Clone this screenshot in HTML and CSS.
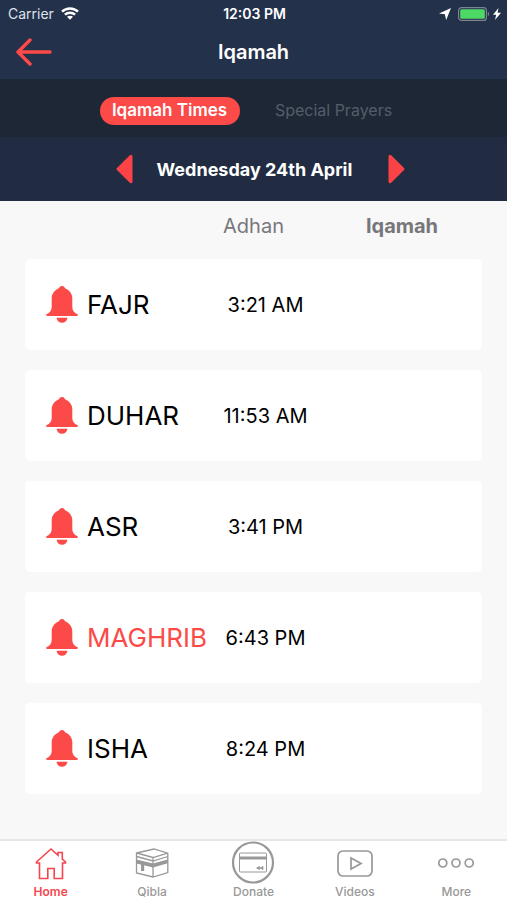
FILE: index.html
```
<!DOCTYPE html>
<html lang="en">
<head>
    <meta charset="UTF-8">
    <meta name="viewport" content="width=device-width, initial-scale=1.0">
    <title>Iqamah</title>
    <link rel="stylesheet" href="styles.css">
</head>
<body>
    <!-- shared icons -->
    <svg class="sprite" width="0" height="0" aria-hidden="true">
        <symbol id="bell" viewBox="0 0 32 38">
            <path d="M16 0c1.500 0 2.400.8 3 2.200C23.500 4.200 26.300 7.800 26.300 12v9c0 3.500 1.700 5.500 5.200 7.300.7.500.5 1.700-.5 1.700H1c-1 0-1.200-1.200-.5-1.700C4 26.500 5.700 24.500 5.700 21v-9c0-4.200 2.800-7.800 7.300-9.800C13.600.8 14.500 0 16 0z"/>
            <path d="M10.500 31.800h11c-.5 3-2.600 5-5.500 5s-5-2-5.500-5z"/>
        </symbol>
    </svg>

    <header class="header">
        <div class="status-bar">
            <div class="status-left">
                <span>Carrier</span>
                <svg width="18" height="13" viewBox="0 0 18 13" fill="none" stroke="#fff" stroke-width="2.400">
                    <path d="M1 4.700C5.500.4 12.500.4 17 4.700M3.900 7.700c2.900-2.700 7.300-2.700 10.200 0"/>
                    <path d="M9 12.700L6 9.800c1.700-1.500 4.300-1.500 6 0z" fill="#fff" stroke="none"/>
                </svg>
            </div>
            <div class="status-time">12:03 PM</div>
            <div class="status-right">
                <svg width="12" height="12" viewBox="0 0 12 12" fill="#fff">
                    <path d="M12 0L7.200 12 5.800 6.300 0 5.400z"/>
                </svg>
                <svg width="32" height="14" viewBox="0 0 32 14">
                    <rect x=".6" y=".6" width="27.800" height="12.800" rx="3" fill="none" stroke="#7b8591" stroke-width="1.200"/>
                    <rect x="2.200" y="2.200" width="24.600" height="9.600" rx="1.500" fill="#4cd964"/>
                    <path d="M29.800 4.600c1.800.8 1.800 4 0 4.800z" fill="#7b8591"/>
                </svg>
                <svg width="8" height="12" viewBox="0 0 8 12" fill="#fff">
                    <path d="M5.500 0L0 6.800h3.200L2 12l6-7.200H4.600z"/>
                </svg>
            </div>
        </div>
        <div class="nav-bar">
            <button class="back-button" aria-label="Back">
                <svg width="36" height="28" viewBox="0 0 36 28" fill="none" stroke="#fb4a47" stroke-width="3.400" stroke-linecap="round" stroke-linejoin="round">
                    <path d="M34 14H2M14 2L2 14l12 12"/>
                </svg>
            </button>
            <h1>Iqamah</h1>
        </div>
    </header>

    <div class="switcher">
        <button class="switch-button active">Iqamah Times</button>
        <button class="switch-button">Special Prayers</button>
    </div>

    <div class="date-bar">
        <button aria-label="Previous day">
            <svg width="17" height="30" viewBox="0 0 17 30" fill="#fb4247"><path d="M13.800 1.300Q16.500-.5 16.500 3v24q0 3.500-2.700 1.700L1 16q-1-1 0-2z"/></svg>
        </button>
        <div class="date">Wednesday 24th April</div>
        <button aria-label="Next day">
            <svg width="17" height="30" viewBox="0 0 17 30" fill="#fb4247"><path d="M3.200 1.300Q.5-.5.500 3v24q0 3.500 2.700 1.700L16 16q1-1 0-2z"/></svg>
        </button>
    </div>

    <main class="content">
        <table class="times">
            <thead>
                <tr>
                    <td></td>
                    <th scope="col" class="col-adhan">Adhan</th>
                    <th scope="col" class="col-iqamah">Iqamah</th>
                </tr>
            </thead>
            <tbody>
                <tr>
                    <th scope="row"><svg class="bell"><use href="#bell"/></svg>FAJR</th>
                    <td>3:21 AM</td>
                    <td></td>
                </tr>
                <tr>
                    <th scope="row"><svg class="bell"><use href="#bell"/></svg>DUHAR</th>
                    <td>11:53 AM</td>
                    <td></td>
                </tr>
                <tr>
                    <th scope="row"><svg class="bell"><use href="#bell"/></svg>ASR</th>
                    <td>3:41 PM</td>
                    <td></td>
                </tr>
                <tr class="next">
                    <th scope="row"><svg class="bell"><use href="#bell"/></svg>MAGHRIB</th>
                    <td>6:43 PM</td>
                    <td></td>
                </tr>
                <tr>
                    <th scope="row"><svg class="bell"><use href="#bell"/></svg>ISHA</th>
                    <td>8:24 PM</td>
                    <td></td>
                </tr>
            </tbody>
        </table>
    </main>

    <nav class="tab-bar">
        <a href="#" class="active">
            <svg width="32" height="44" viewBox="0 0 32 44" stroke-width="1.600">
                <path d="M4.500 22H1.500v-1L16 8l7 6.300v-2.800h4.300v6.700l3.200 2.800v1h-3V37.500h-8.300v-10h-6.400v10H4.500z"/>
            </svg>
            <span>Home</span>
        </a>
        <a href="#">
            <svg width="34" height="44" viewBox="0 0 34 44" stroke-width="1.300">
                <path d="M1.500 12L19 8l13.800 4.200v19.300L18 36 1.500 32zM1.500 12L18 16.500l14.800-4.300M18 16.500V36M1.500 15.500L18 20l14.800-4.500"/>
                <path d="M1.500 18.500L18 22.500l14.800-4v3.700L18 26.500l-16.500-4z" fill="currentColor" stroke="none"/>
                <path d="M6 23h3.200v7H6z" fill="currentColor" stroke="none"/>
            </svg>
            <span>Qibla</span>
        </a>
        <a href="#">
            <svg width="44" height="44" viewBox="0 0 44 44">
                <circle cx="22" cy="21.500" r="20" stroke-width="2.200"/>
                <rect x="8.500" y="12" width="27" height="19" rx="1" stroke-width="1"/>
                <path d="M8.500 17h27" stroke-width="3"/>
                <path d="M25.500 27l3-1.500v3zM32 25.500v3l-3-1.500z" fill="currentColor" stroke-width=".8"/>
            </svg>
            <span>Donate</span>
        </a>
        <a href="#">
            <svg width="36" height="44" viewBox="0 0 36 44" stroke-width="1.700">
                <rect x="1" y="10" width="34" height="25" rx="5"/>
                <path d="M14 17v11l10-5.500z"/>
            </svg>
            <span>Videos</span>
        </a>
        <a href="#">
            <svg width="36" height="44" viewBox="0 0 36 44" stroke-width="1.700">
                <circle cx="4.800" cy="22" r="4"/>
                <circle cx="18" cy="22" r="4"/>
                <circle cx="31.200" cy="22" r="4"/>
            </svg>
            <span>More</span>
        </a>
    </nav>
</body>
</html>
```
FILE: styles.css
```
:root {
    --red: #fb4a47;
    --navy: #24314b;
    --navy-dark: #1e2736;
    --navy-mid: #212c42;
    --page: #f8f8f8;
    --gray: #989898;
}

* {
    margin: 0;
    padding: 0;
    box-sizing: border-box;
    font-family: Inter, Roboto, "Liberation Sans", sans-serif;
}

body {
    display: flex;
    flex-direction: column;
    min-height: 100vh;
    background: var(--page);
    color: #000;
}

svg {
    display: block;
}

.sprite {
    position: absolute;
}

button {
    background: none;
    border: none;
    cursor: pointer;
}

.header {
    background: var(--navy);
    color: #fff;
}

.status-bar {
    display: grid;
    grid-template-columns: 1fr auto 1fr;
    align-items: center;
    height: 27px;
    padding: 0 6px 0 8px;
    font-size: 14px;
}

.status-left,
.status-right {
    display: flex;
    align-items: center;
    gap: 7px;
}

.status-left {
    color: #dfe3ea;
}

.status-right {
    justify-content: flex-end;
}

.status-right svg:last-child {
    margin-left: -4px;
}

.status-time {
    font-weight: 600;
}

.nav-bar {
    display: grid;
    grid-template-columns: 1fr auto 1fr;
    align-items: center;
    height: 52px;
    padding: 0 16px 2px;
}

.back-button {
    justify-self: start;
}

.nav-bar h1 {
    font-size: 20px;
    font-weight: 600;
}

.switcher {
    display: flex;
    justify-content: center;
    align-items: center;
    gap: 24px;
    height: 58px;
    padding: 6px 4px 0 0;
    background: var(--navy-dark);
}

.switch-button {
    width: 140px;
    height: 28px;
    border-radius: 14px;
    padding-bottom: 2px;
    font-size: 16px;
    white-space: nowrap;
    color: #555d69;
}

.switch-button.active {
    background: var(--red);
    color: #fff;
    font-size: 17px;
    font-weight: 600;
}

.date-bar {
    display: flex;
    justify-content: center;
    align-items: center;
    height: 64px;
    padding-left: 14px;
    background: var(--navy-mid);
}

.date {
    padding: 0 36px 0 24px;
    font-size: 18px;
    font-weight: 700;
    color: #fff;
}

.content {
    flex: 1;
    padding: 0 25px 20px;
}

.times,
.times thead,
.times tbody {
    display: block;
}

.times tr {
    display: grid;
    grid-template-columns: 184px 1fr 160px;
    align-items: center;
}

.times thead tr {
    height: 50px;
    margin-bottom: 8px;
    color: #77777b;
    font-size: 20px;
}

.col-adhan {
    padding-right: 24px;
    font-weight: 400;
}

.col-iqamah {
    font-weight: 700;
}

.times tbody tr {
    height: 91px;
    margin-bottom: 20px;
    background: #fff;
    border-radius: 5px;
}

.times tbody th {
    display: flex;
    align-items: center;
    gap: 9px;
    padding-left: 21px;
    font-size: 26px;
    font-weight: 400;
}

.times tbody td {
    font-size: 20px;
    text-align: center;
}

.next th {
    color: var(--red);
}

.bell {
    width: 32px;
    height: 38px;
    fill: var(--red);
}

.tab-bar {
    display: grid;
    grid-template-columns: repeat(5, 1fr);
    height: 61px;
    border-top: 2px solid #e6e6e6;
    background: #fff;
}

.tab-bar a {
    display: flex;
    flex-direction: column;
    align-items: center;
    color: var(--gray);
    font-size: 12px;
    line-height: 14px;
    font-weight: 500;
    text-decoration: none;
}

.tab-bar a.active {
    color: #f5454f;
    font-weight: 600;
}

.tab-bar svg {
    fill: none;
    stroke: currentColor;
}
```
